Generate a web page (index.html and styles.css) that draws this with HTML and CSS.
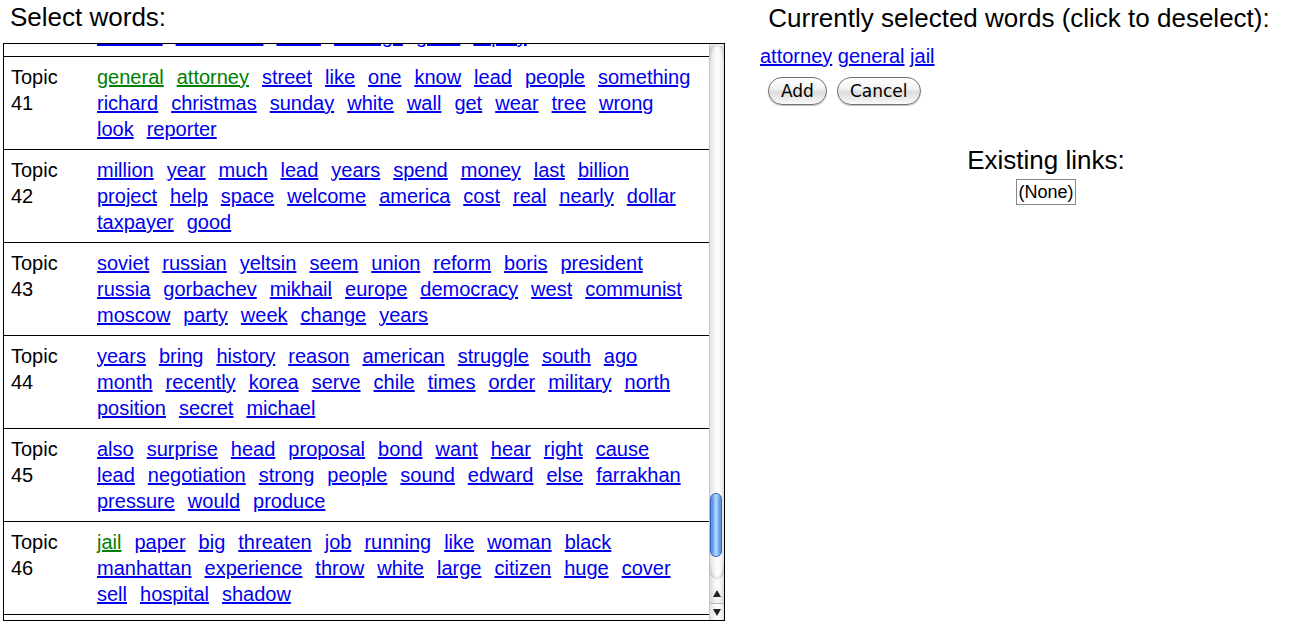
FILE: index.html
```html
<!DOCTYPE html>
<html>
<head>
<meta charset="utf-8">
<title>Select words</title>
<link rel="stylesheet" href="styles.css">
</head>
<body>
<div class="page">
  <div class="left">
    <h1 class="title">Select words:</h1>
    <div class="box">
      <div class="viewport">
        <div class="list">
          <div class="row">
            <div class="label">Topic<br>40</div>
            <div class="words">
              <a href="#">student</a><a href="#">interested</a><a href="#">dead</a><a href="#">feelings</a><a href="#">gone</a><a href="#">equity</a>
            </div>
          </div>
          <div class="row">
            <div class="label">Topic<br>41</div>
            <div class="words">
              <a href="#" class="sel">general</a><a href="#" class="sel">attorney</a><a href="#">street</a><a href="#">like</a><a href="#">one</a><a href="#">know</a><a href="#">lead</a><a href="#">people</a><a href="#">something</a><a href="#">richard</a><a href="#">christmas</a><a href="#">sunday</a><a href="#">white</a><a href="#">wall</a><a href="#">get</a><a href="#">wear</a><a href="#">tree</a><a href="#">wrong</a><a href="#">look</a><a href="#">reporter</a>
            </div>
          </div>
          <div class="row">
            <div class="label">Topic<br>42</div>
            <div class="words">
              <a href="#">million</a><a href="#">year</a><a href="#">much</a><a href="#">lead</a><a href="#">years</a><a href="#">spend</a><a href="#">money</a><a href="#">last</a><a href="#">billion</a><a href="#">project</a><a href="#">help</a><a href="#">space</a><a href="#">welcome</a><a href="#">america</a><a href="#">cost</a><a href="#">real</a><a href="#">nearly</a><a href="#">dollar</a><a href="#">taxpayer</a><a href="#">good</a>
            </div>
          </div>
          <div class="row">
            <div class="label">Topic<br>43</div>
            <div class="words">
              <a href="#">soviet</a><a href="#">russian</a><a href="#">yeltsin</a><a href="#">seem</a><a href="#">union</a><a href="#">reform</a><a href="#">boris</a><a href="#">president</a><a href="#">russia</a><a href="#">gorbachev</a><a href="#">mikhail</a><a href="#">europe</a><a href="#">democracy</a><a href="#">west</a><a href="#">communist</a><a href="#">moscow</a><a href="#">party</a><a href="#">week</a><a href="#">change</a><a href="#">years</a>
            </div>
          </div>
          <div class="row">
            <div class="label">Topic<br>44</div>
            <div class="words">
              <a href="#">years</a><a href="#">bring</a><a href="#">history</a><a href="#">reason</a><a href="#">american</a><a href="#">struggle</a><a href="#">south</a><a href="#">ago</a><a href="#">month</a><a href="#">recently</a><a href="#">korea</a><a href="#">serve</a><a href="#">chile</a><a href="#">times</a><a href="#">order</a><a href="#">military</a><a href="#">north</a><a href="#">position</a><a href="#">secret</a><a href="#">michael</a>
            </div>
          </div>
          <div class="row">
            <div class="label">Topic<br>45</div>
            <div class="words">
              <a href="#">also</a><a href="#">surprise</a><a href="#">head</a><a href="#">proposal</a><a href="#">bond</a><a href="#">want</a><a href="#">hear</a><a href="#">right</a><a href="#">cause</a><a href="#">lead</a><a href="#">negotiation</a><a href="#">strong</a><a href="#">people</a><a href="#">sound</a><a href="#">edward</a><a href="#">else</a><a href="#">farrakhan</a><a href="#">pressure</a><a href="#">would</a><a href="#">produce</a>
            </div>
          </div>
          <div class="row">
            <div class="label">Topic<br>46</div>
            <div class="words">
              <a href="#" class="sel">jail</a><a href="#">paper</a><a href="#">big</a><a href="#">threaten</a><a href="#">job</a><a href="#">running</a><a href="#">like</a><a href="#">woman</a><a href="#">black</a><a href="#">manhattan</a><a href="#">experience</a><a href="#">throw</a><a href="#">white</a><a href="#">large</a><a href="#">citizen</a><a href="#">huge</a><a href="#">cover</a><a href="#">sell</a><a href="#">hospital</a><a href="#">shadow</a>
            </div>
          </div>
        </div>
      </div>
      <div class="scrollbar">
        <div class="track">
          <div class="cap cap-top"></div>
          <div class="thumb" style="top: 449px; height: 64px;"></div>
          <div class="cap cap-bottom"></div>
        </div>
        <div class="arrow arrow-up"><span class="tri tri-up"></span></div>
        <div class="arrow arrow-down"><span class="tri tri-down"></span></div>
      </div>
    </div>
  </div>
  <div class="right">
    <h2 class="title title-right">Currently selected words (click to deselect):</h2>
    <div class="selected">
      <a href="#">attorney</a> <a href="#">general</a> <a href="#">jail</a>
    </div>
    <div class="buttons">
      <button class="btn" type="button">Add</button>
      <button class="btn" type="button">Cancel</button>
    </div>
    <div class="existing">
      <h2 class="title">Existing links:</h2>
      <div class="none">(None)</div>
    </div>
  </div>
</div>
</body>
</html>
```

FILE: styles.css
```css
html, body {
  margin: 0;
  padding: 0;
  background: #fff;
}

body {
  font-family: "Liberation Sans", Arial, Helvetica, sans-serif;
  color: #000;
}

.page {
  display: flex;
  align-items: flex-start;
  width: 1295px;
  height: 628px;
  overflow: hidden;
}

.left {
  width: 722px;
  padding-left: 3px;
  flex: none;
}

.title {
  margin: 0;
  font-size: 26px;
  font-weight: normal;
  line-height: 30px;
}

.left .title {
  padding: 2px 0 0 7px;
  height: 30px;
  margin-bottom: 11px;
}

.box {
  border: 1px solid #000;
  height: 576px;
  display: flex;
}

.viewport {
  flex: 1;
  overflow: hidden;
  height: 576px;
}

.list {
  margin-top: -54px;
}

.row {
  display: grid;
  grid-template-columns: 86px 600px;
  padding: 7px 0 7px 7px;
  border-bottom: 1px solid #000;
  font-size: 20px;
  line-height: 26px;
}

.words {
  display: flex;
  flex-wrap: wrap;
  column-gap: 13px;
  align-self: end;
}

a {
  color: #0000ee;
  text-decoration: underline;
}

a.sel {
  color: #008000;
}

/* Aqua-like scrollbar */
.scrollbar {
  width: 15px;
  flex: none;
  display: flex;
  flex-direction: column;
  border-left: 1px solid #c4c4c4;
  box-sizing: border-box;
  background: linear-gradient(to right, #e2e2e2, #f6f6f6 35%, #ffffff 55%, #f2f2f2 80%, #dedede);
}

.track {
  flex: 1;
  position: relative;
}

.cap {
  position: absolute;
  left: 0;
  right: 0;
  height: 16px;
}

.cap-top {
  top: 0;
  border-radius: 7px 7px 0 0;
  background: radial-gradient(ellipse at 50% 100%, rgba(255,255,255,0) 55%, rgba(170,170,170,0.55) 80%, rgba(200,200,200,0.4) 100%);
}

.cap-bottom {
  bottom: 0;
  border-radius: 0 0 7px 7px;
  background: radial-gradient(ellipse at 50% 0%, rgba(255,255,255,0) 55%, rgba(170,170,170,0.55) 80%, rgba(200,200,200,0.4) 100%);
}

.thumb {
  position: absolute;
  left: 0;
  width: 12px;
  box-sizing: border-box;
  border: 1px solid #2f5fb8;
  border-radius: 6px;
  background: linear-gradient(to right, #3f78d9, #7fb4f2 30%, #bcdcff 50%, #86bbf5 70%, #3c74d6);
  box-shadow: inset 0 0 2px rgba(255,255,255,0.6);
}

.arrow {
  display: flex;
  justify-content: center;
  box-sizing: border-box;
}

.arrow-up {
  height: 25px;
  align-items: flex-end;
  padding-bottom: 6px;
  border-bottom: 1px solid #b8b8b8;
  background: radial-gradient(ellipse at 50% 0%, rgba(255,255,255,0) 40%, rgba(190,190,190,0.35) 100%);
}

.arrow-down {
  height: 16px;
  align-items: center;
}

.tri {
  width: 0;
  height: 0;
  border-left: 4px solid transparent;
  border-right: 4px solid transparent;
}

.tri-up {
  border-bottom: 7px solid #222;
}

.tri-down {
  border-top: 7px solid #222;
}

/* Right column */
.right {
  flex: 1;
  padding-left: 18px;
  display: flex;
  flex-direction: column;
}

.title-right {
  text-align: center;
  padding-top: 3px;
}

.selected {
  padding-left: 17px;
  margin-top: 10px;
  font-size: 20px;
  line-height: 26px;
}

.buttons {
  display: flex;
  gap: 10px;
  padding-left: 25px;
  margin-top: 8px;
}

.btn {
  height: 28px;
  padding: 0 12px;
  border: 1px solid #6f6f6f;
  border-radius: 14px;
  background: linear-gradient(#ffffff, #f3f3f3 40%, #dedede 55%, #eeeeee 85%, #fafafa);
  box-shadow: 0 1px 1px rgba(0,0,0,0.25);
  font-family: "DejaVu Sans", "Liberation Sans", sans-serif;
  font-size: 17px;
  line-height: 26px;
  color: #000;
}

.existing {
  padding-left: 54px;
  margin-top: 40px;
  display: flex;
  flex-direction: column;
  align-items: center;
}

.existing .title {
  text-align: center;
}

.none {
  margin-top: 4px;
  border: 1px solid #888;
  font-size: 18px;
  line-height: 24px;
  padding: 0 1px;
}
```
